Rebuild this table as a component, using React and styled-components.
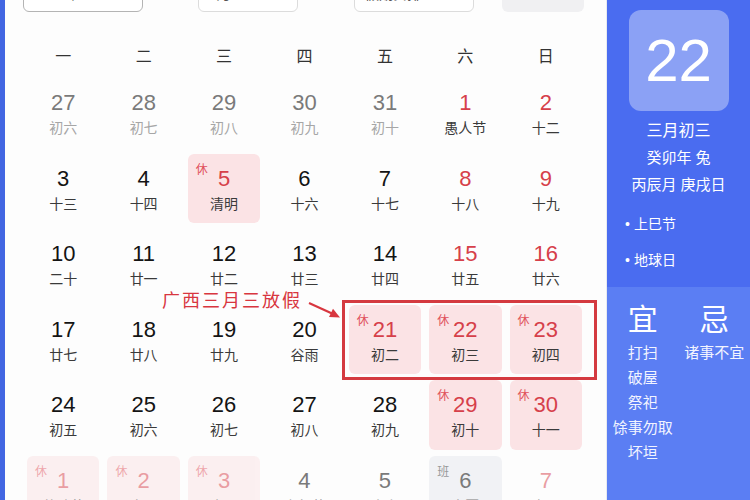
import React from 'react';
import styled, { createGlobalStyle } from 'styled-components';

const Global = createGlobalStyle`
  html, body { margin: 0; padding: 0; }
  body {
    width: 750px; height: 500px; overflow: hidden; background: #fff;
    font-family: "Liberation Sans", "Noto Sans CJK SC", sans-serif;
  }
`;

const Page = styled.div`
  display: flex;
  width: 750px;
  height: 500px;
  overflow: hidden;
`;

const Stripe = styled.div`
  flex: none;
  width: 5px;
  background: #4266e2;
`;

const Main = styled.div`
  flex: none;
  width: 602px;
  box-sizing: border-box;
  padding: 0 20px 0 18px;
  background: #fdfdfd;
  border-right: 1px solid #e8eaf0;
`;

const Toolbar = styled.div`
  display: flex;
  align-items: flex-start;
  height: 30px;
  margin-top: -18px;
`;

const SelectBox = styled.div`
  box-sizing: border-box;
  width: ${p => p.$w}px;
  height: 30px;
  border: 1px solid ${p => (p.$active ? '#b4b4b4' : '#dcdcdc')};
  border-radius: 6px;
  background: #fff;
  font-size: 14px;
  line-height: 16px;
  padding: 3px 0 0 10px;
  color: #555;
  white-space: nowrap;
`;

const Chevron = styled.div`
  width: 22px;
  margin: 0 ${p => p.$r}px 0 ${p => p.$l}px;
  text-align: center;
  font-size: 15px;
  line-height: 16px;
  padding-top: 4px;
  color: #333;
`;

const TodayBtn = styled.div`
  box-sizing: border-box;
  width: 82px;
  height: 30px;
  margin-left: 28px;
  padding-top: 3px;
  border-radius: 6px;
  background: #f0f0f2;
  font-size: 14px;
  line-height: 16px;
  text-align: center;
  color: #555;
  white-space: nowrap;
`;

const WeekHeader = styled.div`
  display: grid;
  grid-template-columns: repeat(7, 1fr);
  margin-top: 23px;
  height: 40px;
  align-items: center;
  text-align: center;
  font-size: 16px;
  color: #333;
`;

const Grid = styled.div`
  position: relative;
  display: grid;
  grid-template-columns: repeat(7, 1fr);
  grid-template-rows: repeat(6, 75.5px);
`;

const Cell = styled.div`
  padding: 3px 4px;
  box-sizing: border-box;
`;

const Inner = styled.div`
  position: relative;
  height: 100%;
  box-sizing: border-box;
  padding-top: 13px;
  border-radius: 6px;
  text-align: center;
  background: ${p => (p.$bg === 'rest' ? '#fbe3e5' : p.$bg === 'work' ? '#f1f2f5' : 'transparent')};
  opacity: ${p => (p.$dim ? 0.5 : 1)};
`;

const numColors = { normal: '#141414', red: '#d6404a', gray: '#7a7a7a' };
const Num = styled.div`
  font-size: 22px;
  line-height: 24px;
  color: ${p => numColors[p.$tone]};
`;

const Lunar = styled.div`
  margin-top: 4px;
  font-size: 14px;
  line-height: 18px;
  color: ${p => (p.$tone === 'gray' ? '#a6a6a6' : '#3a3a3a')};
`;

const Tag = styled.span`
  position: absolute;
  left: 8px;
  top: 9px;
  font-size: 12px;
  line-height: 14px;
  color: ${p => (p.$kind === 'work' ? '#9a9a9a' : '#e0505a')};
`;

const Frame = styled.div`
  position: absolute;
  left: 319px;
  top: 225px;
  width: 255px;
  height: 80px;
  box-sizing: border-box;
  border: 3px solid #d43a40;
  pointer-events: none;
`;

const Note = styled.div`
  position: absolute;
  left: 139px;
  top: 216px;
  font-size: 18px;
  line-height: 20px;
  letter-spacing: 2px;
  color: #d8363f;
  white-space: nowrap;
`;

const NoteArrow = styled.svg`
  position: absolute;
  left: 284px;
  top: 224px;
`;

const Panel = styled.div`
  flex: 1;
  display: flex;
  flex-direction: column;
  background: #4a6cf0;
  color: #fff;
`;

const PanelTop = styled.div`
  height: 287px;
  flex: none;
  padding-top: 10px;
  box-sizing: border-box;
`;

const DateBox = styled.div`
  width: 100px;
  height: 101px;
  margin: 0 auto;
  border-radius: 12px;
  background: rgba(255, 255, 255, 0.36);
  font-size: 60px;
  line-height: 101px;
  text-align: center;
`;

const InfoLine = styled.div`
  font-size: ${p => p.$size}px;
  line-height: 27px;
  text-align: center;
  white-space: nowrap;
`;

const FestList = styled.div`
  margin-top: 8px;
  padding-left: 18px;
`;

const Fest = styled.div`
  font-size: 14px;
  line-height: 36px;
  &::before {
    content: '•';
    margin-right: 4px;
  }
`;

const PanelBottom = styled.div`
  flex: 1;
  background: #5b7ef3;
  display: grid;
  grid-template-columns: 1fr 1fr;
  align-content: start;
  padding-top: 15px;
`;

const AdviceCol = styled.div`
  display: flex;
  flex-direction: column;
  align-items: center;
`;

const AdviceHead = styled.div`
  font-size: 30px;
  line-height: 36px;
  margin-bottom: 2px;
`;

const AdviceItem = styled.div`
  font-size: 15px;
  line-height: 25px;
  white-space: nowrap;
  color: #f2f4ff;
`;

const weekdays = ['一', '二', '三', '四', '五', '六', '日'];

// [num, lunar, numTone, lunarTone, tag, bg, dim]
const days = [
  [27, '初六', 'gray', 'gray'], [28, '初七', 'gray', 'gray'], [29, '初八', 'gray', 'gray'],
  [30, '初九', 'gray', 'gray'], [31, '初十', 'gray', 'gray'], [1, '愚人节', 'red'], [2, '十二', 'red'],
  [3, '十三'], [4, '十四'], [5, '清明', 'red', null, '休', 'rest'], [6, '十六'], [7, '十七'],
  [8, '十八', 'red'], [9, '十九', 'red'],
  [10, '二十'], [11, '廿一'], [12, '廿二'], [13, '廿三'], [14, '廿四'], [15, '廿五', 'red'], [16, '廿六', 'red'],
  [17, '廿七'], [18, '廿八'], [19, '廿九'], [20, '谷雨'],
  [21, '初二', 'red', null, '休', 'rest'], [22, '初三', 'red', null, '休', 'rest'], [23, '初四', 'red', null, '休', 'rest'],
  [24, '初五'], [25, '初六'], [26, '初七'], [27, '初八'], [28, '初九'],
  [29, '初十', 'red', null, '休', 'rest'], [30, '十一', 'red', null, '休', 'rest'],
  [1, '劳动节', 'red', null, '休', 'rest', true], [2, '十三', 'red', null, '休', 'rest', true],
  [3, '十四', 'red', null, '休', 'rest', true], [4, '青年节', 'gray', 'gray'], [5, '十六', 'gray', 'gray'],
  [6, '立夏', 'gray', 'gray', '班', 'work'], [7, '十八', 'red', null, null, null, true],
];

export default function App() {
  return (
    <>
      <Global />
      <Page>
        <Stripe />
        <Main>
          <Toolbar>
            <SelectBox $w={120} $active>2023年</SelectBox>
            <Chevron $l={22} $r={11}>&lt;</Chevron>
            <SelectBox $w={100}>4月</SelectBox>
            <Chevron $l={10} $r={24}>&gt;</Chevron>
            <SelectBox $w={120}>假期安排</SelectBox>
            <TodayBtn>返回今天</TodayBtn>
          </Toolbar>
          <WeekHeader>
            {weekdays.map(w => <div key={w}>{w}</div>)}
          </WeekHeader>
          <Grid>
            {days.map(([n, l, nt = 'normal', lt = 'normal', tag, bg, dim], i) => (
              <Cell key={i}>
                <Inner $bg={bg} $dim={dim}>
                  {tag && <Tag $kind={bg}>{tag}</Tag>}
                  <Num $tone={nt}>{n}</Num>
                  <Lunar $tone={lt}>{l}</Lunar>
                </Inner>
              </Cell>
            ))}
            <Note>广西三月三放假</Note>
            <NoteArrow width="36" height="24" viewBox="0 0 36 24">
              <line x1="2" y1="4" x2="25" y2="14.5" stroke="#d8363f" strokeWidth="2.2" />
              <polygon points="33,18.5 26,9.8 22,18" fill="#d8363f" />
            </NoteArrow>
            <Frame />
          </Grid>
        </Main>
        <Panel>
          <PanelTop>
            <DateBox>22</DateBox>
            <InfoLine $size={16} style={{ marginTop: 6 }}>三月初三</InfoLine>
            <InfoLine $size={15}>癸卯年 兔</InfoLine>
            <InfoLine $size={15}>丙辰月 庚戌日</InfoLine>
            <FestList>
              <Fest>上巳节</Fest>
              <Fest>地球日</Fest>
            </FestList>
          </PanelTop>
          <PanelBottom>
            <AdviceCol>
              <AdviceHead>宜</AdviceHead>
              <AdviceItem>打扫</AdviceItem>
              <AdviceItem>破屋</AdviceItem>
              <AdviceItem>祭祀</AdviceItem>
              <AdviceItem>馀事勿取</AdviceItem>
              <AdviceItem>坏垣</AdviceItem>
            </AdviceCol>
            <AdviceCol>
              <AdviceHead>忌</AdviceHead>
              <AdviceItem>诸事不宜</AdviceItem>
            </AdviceCol>
          </PanelBottom>
        </Panel>
      </Page>
    </>
  );
}
